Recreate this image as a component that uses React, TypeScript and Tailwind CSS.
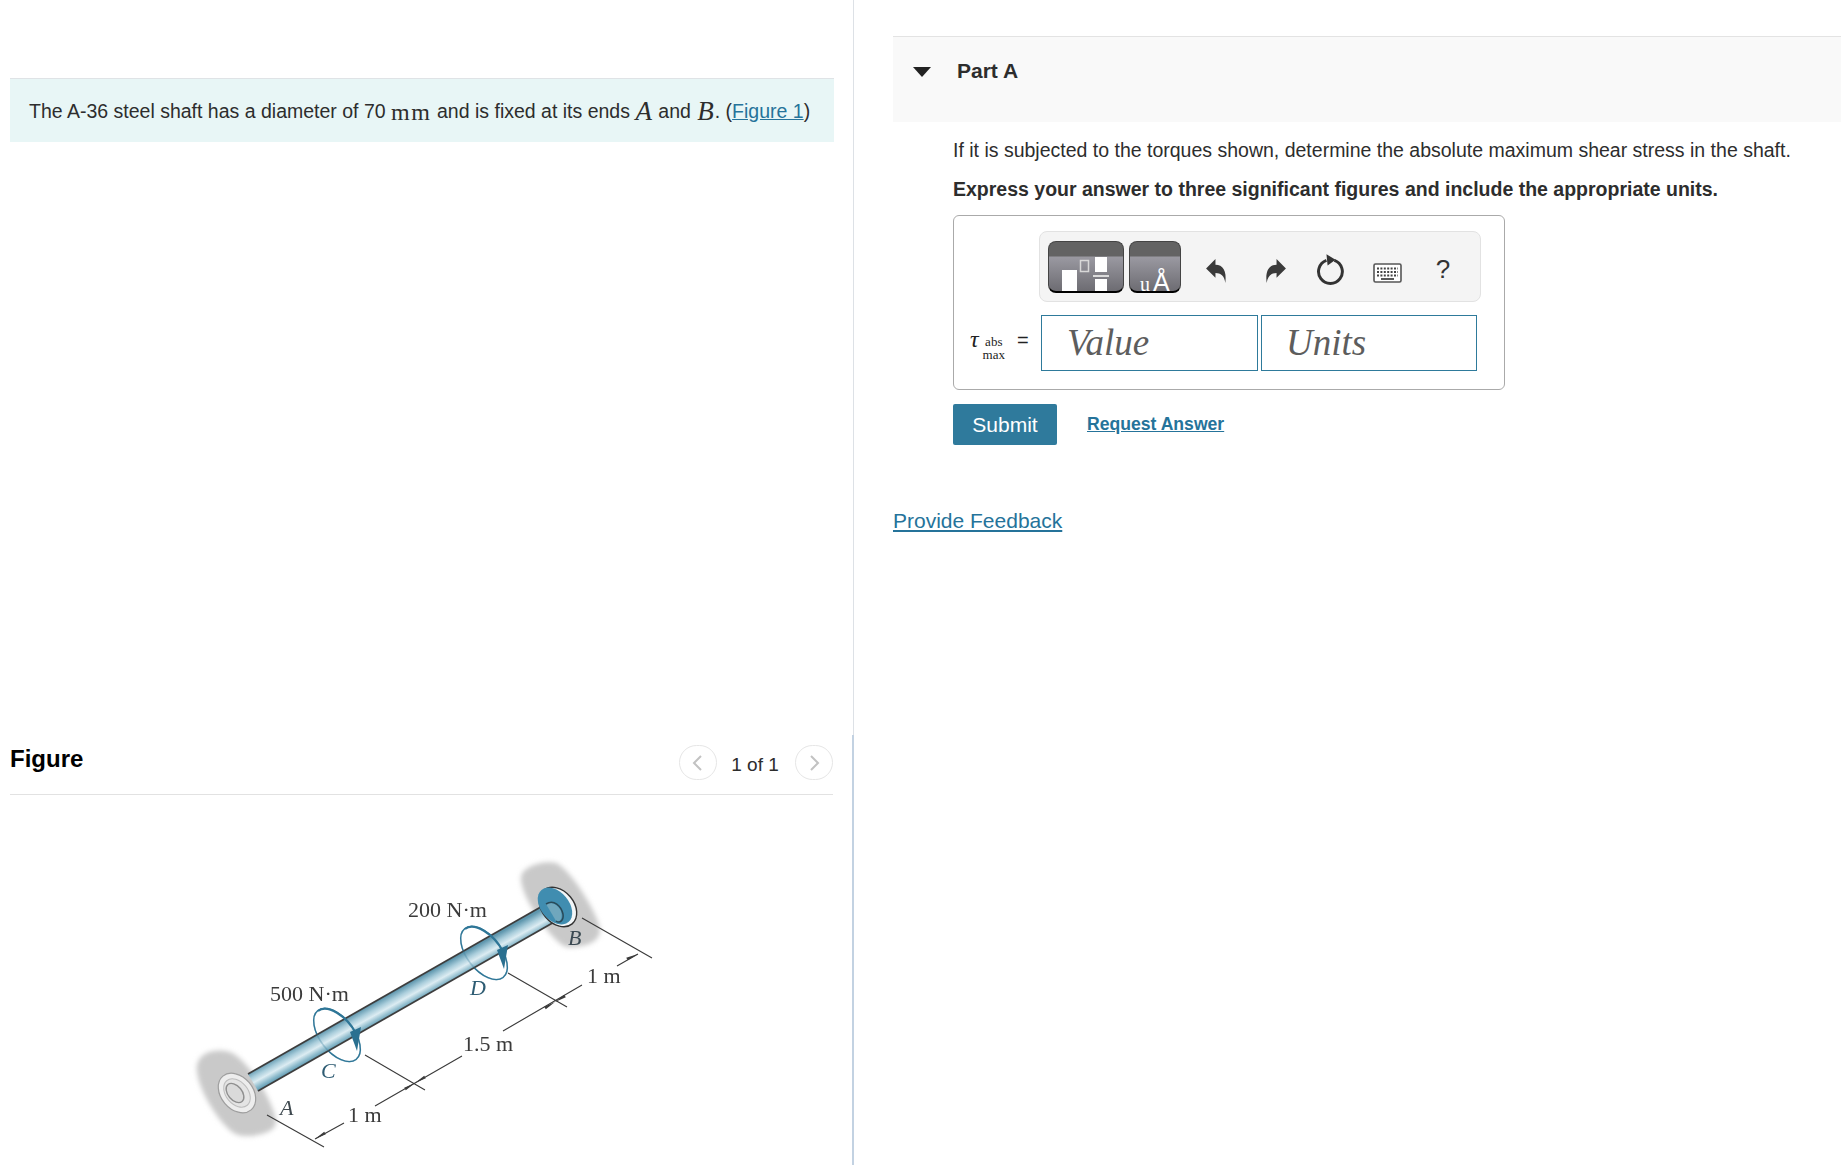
const Ring = ({ dx, dy }: { dx: number; dy: number }) => (
  <g transform={`translate(${dx} ${dy})`}>
    <ellipse cx="337" cy="1035" rx="31" ry="17" transform="rotate(52 337 1035)" fill="none" stroke="#2f7697" strokeOpacity="0.3" strokeWidth="1.6" />
    <path d="M318 1011 A31 17 52 0 1 356 1033.5" fill="none" stroke="#2f7697" strokeWidth="2.2" />
    <polygon points="350,1032 361,1027 357,1051" fill="#2a6f90" />
  </g>
);

const Shaft = () => (
  <svg viewBox="180 850 500 315" className="w-[500px] h-[315px] block">
    <defs>
      <linearGradient id="sh" gradientUnits="userSpaceOnUse" x1="397" y1="990" x2="407" y2="1008">
        <stop offset="0" stopColor="#5f97ae" />
        <stop offset="0.3" stopColor="#a9cddb" />
        <stop offset="0.55" stopColor="#dcecf2" />
        <stop offset="0.8" stopColor="#8fbccd" />
        <stop offset="1" stopColor="#5c98b0" />
      </linearGradient>
      <filter id="b1"><feGaussianBlur stdDeviation="0.5" /></filter>
      <filter id="b2"><feGaussianBlur stdDeviation="2.5" /></filter>
    </defs>
    <g filter="url(#b2)" fill="#c9c9c9">
      <path d="M197 1065 C200 1050 222 1048 232 1053 C250 1062 275 1105 276 1122 C276 1134 250 1138 238 1135 C222 1130 194 1085 197 1065Z" />
      <path d="M521 878 C521 866 545 860 556 863 C572 870 600 918 600 930 C600 945 578 948 566 947 C550 940 520 895 521 878Z" />
    </g>
    <g filter="url(#b1)">
      <ellipse cx="337" cy="1035" rx="31" ry="17" transform="rotate(52 337 1035)" fill="none" stroke="#2f7697" strokeWidth="1.4" />
      <ellipse cx="484" cy="953" rx="31" ry="17" transform="rotate(52 484 953)" fill="none" stroke="#2f7697" strokeWidth="1.4" />
      <polygon points="248,1074 546,904 556,921 258,1091" fill="url(#sh)" />
      <line x1="248" y1="1074" x2="546" y2="904" stroke="#3e3e3e" strokeWidth="1.8" />
      <line x1="258" y1="1091" x2="556" y2="921" stroke="#3e3e3e" strokeWidth="1.8" />
      <Ring dx={0} dy={0} />
      <Ring dx={147} dy={-82} />
      <ellipse cx="237" cy="1093" rx="22" ry="16" transform="rotate(50 237 1093)" fill="#ededed" stroke="#9e9e9e" strokeWidth="1.2" />
      <ellipse cx="237" cy="1093" rx="16" ry="11" transform="rotate(50 237 1093)" fill="#e4e4e4" stroke="#bdbdbd" strokeWidth="1" />
      <ellipse cx="235" cy="1093" rx="11" ry="7" transform="rotate(50 235 1093)" fill="#dadada" stroke="#8f8f8f" strokeWidth="1.4" />
      <ellipse cx="558" cy="907" rx="22" ry="16" transform="rotate(50 558 907)" fill="#f2f6f8" stroke="#333" strokeWidth="1.4" />
      <ellipse cx="555" cy="906" rx="21" ry="14" transform="rotate(50 555 906)" fill="#3f8db0" />
      <path d="M546 904 C552 901 558 905 561 911 C563 918 560 923 556 921 Z" fill="#6fa7bd" />
      <path d="M546 904 C554 899 561 906 563 914 C564 920 560 924 556 921" fill="none" stroke="#2a4a58" strokeWidth="1.5" />
      <g stroke="#3a3a3a" strokeWidth="1.1" fill="none">
        <path d="M267 1115 L324 1147 M315 1139 L344 1123 M375 1106 L462 1056 M365 1055 L425 1090" />
        <path d="M508 973 L567 1007 M503 1031 L582 985 M617 966 L638 954 M582 918 L652 958" />
      </g>
      <g fill="#3a3a3a">
        <polygon points="315,1139 325.8,1134.3 324.2,1131.7" />
        <polygon points="415,1083 405.8,1090.3 404.2,1087.7" />
        <polygon points="415,1083 425.8,1078.3 424.2,1075.7" />
        <polygon points="555,1002 545.8,1009.3 544.2,1006.7" />
        <polygon points="555,1002 565.8,997.3 564.2,994.7" />
        <polygon points="638,954 627.8,960.3 626.2,957.7" />
      </g>
    </g>
    <g className="font-['Liberation_Serif',serif]" fill="#3a3a3a" fontSize="22" filter="url(#b1)">
      <text x="270" y="1001">500 N·m</text>
      <text x="408" y="917">200 N·m</text>
      <text x="348" y="1122">1 m</text>
      <text x="463" y="1051">1.5 m</text>
      <text x="587" y="983">1 m</text>
      <g fontStyle="italic">
        <text x="321" y="1078" fill="#2f5c73">C</text>
        <text x="470" y="995" fill="#2f5c73">D</text>
        <text x="568" y="945" fill="#3a4a52">B</text>
        <text x="280" y="1115" fill="#3f4a50">A</text>
      </g>
    </g>
  </svg>
);

const Pager = ({ d }: { d: string }) => (
  <div className="w-[38px] h-[35px] rounded-full border border-[#e6e6e6] flex items-center justify-center">
    <svg width="14" height="18" viewBox="0 0 14 18" fill="none" stroke="#c2c2c2" strokeWidth="2">
      <path d={d} />
    </svg>
  </div>
);

const Arrow = ({ flip }: { flip?: boolean }) => (
  <svg width="21" height="25" viewBox="0 0 20 24" className={flip ? "-scale-x-100" : ""}>
    <path fill="#3a3a3a" d="M0 10 L9 1 L9 6.5 C16 6.5 20 12 18.5 24 C17.5 17 14 14.5 9 14.5 L9 19 Z" />
  </svg>
);

const Keyboard = () => (
  <svg width="29" height="20" viewBox="0 0 29 20" className="block">
    <rect x="1" y="1" width="27" height="18" rx="1.5" fill="#fff" stroke="#555" strokeWidth="1.6" />
    <path d="M4 5.5h21M4 9h21" stroke="#444" strokeWidth="1.8" strokeDasharray="2 1.4" />
    <path d="M4 12.5h21" stroke="#444" strokeWidth="1.8" strokeDasharray="2 1.4" />
    <path d="M8 16h13" stroke="#444" strokeWidth="1.8" />
  </svg>
);

const bar = "bg-[linear-gradient(to_bottom,#636363_0,#636363_14px,#9a99a1_15px,#6d6c72_100%)]";

export default function App() {
  return (
    <div className="w-[1841px] h-[1165px] overflow-hidden bg-white flex font-['Liberation_Sans',Arial,sans-serif] text-[#2d2d2d]">
      <div className="w-[854px] shrink-0 flex flex-col">
        <div className="h-[735px] border-r border-[#dde1e6] pt-[78px] pl-[10px] pr-[19px]">
          <div className="h-[64px] bg-[#e8f6f6] border-t border-[#dfe3e6] pl-[19px] pt-[2px] flex items-center text-[19.5px] whitespace-nowrap">
            <span>The A-36 steel shaft has a diameter of 70&nbsp;</span>
            <span className="font-['Liberation_Serif',serif] text-[24px] tracking-[1.6px] leading-none">mm</span>
            <span>&nbsp;and is fixed at its ends&nbsp;</span>
            <span className="font-['Liberation_Serif',serif] italic text-[27px] leading-none mr-[1px]">A</span>
            <span>&nbsp;and&nbsp;</span>
            <span className="font-['Liberation_Serif',serif] italic text-[27px] leading-none ml-[1px] mr-[1px]">B</span>
            <span>. (</span>
            <span className="text-[#25739a] underline">Figure 1</span>
            <span>)</span>
          </div>
        </div>
        <div className="flex-1 border-r-2 border-[#c3d2e2] pl-[10px] pr-[19px] overflow-hidden">
          <div className="h-[60px] border-b border-[#e2e2e2] flex relative">
            <div className="text-[24px] font-bold text-black leading-[28px] mt-[10px]">Figure</div>
            <div className="ml-auto flex items-start mt-[10px]">
              <Pager d="M10 2 L3 9 L10 16" />
              <div className="w-[76px] text-center text-[19px] leading-[22px] mt-[9px]">1 of 1</div>
              <div className="ml-[2px]"><Pager d="M4 2 L11 9 L4 16" /></div>
            </div>
          </div>
          <div className="pt-[55px] pl-[170px]">
            <Shaft />
          </div>
        </div>
      </div>
      <div className="flex-1 pl-[39px] pt-[36px]">
        <div className="h-[86px] bg-[#f9f9f9] border-t border-[#e3e3e3] flex items-start">
          <svg width="18" height="10" viewBox="0 0 18 10" className="ml-[20px] mt-[30px]">
            <polygon points="0,0 18,0 9,10" fill="#222" />
          </svg>
          <div className="ml-[26px] mt-[22px] text-[21px] leading-[24px] font-bold">Part A</div>
        </div>
        <div className="pl-[60px]">
          <p className="text-[19.5px] leading-[24px] mt-[16px] whitespace-nowrap">If it is subjected to the torques shown, determine the absolute maximum shear stress in the shaft.</p>
          <p className="text-[19.5px] leading-[24px] font-bold mt-[15px] whitespace-nowrap">Express your answer to three significant figures and include the appropriate units.</p>
          <div className="mt-[14px] w-[552px] h-[175px] border border-[#aaaaaa] rounded-[6px] pl-[85px] pt-[15px]">
            <div className="w-[442px] h-[71px] bg-[#f4f4f4] border border-[#e2e2e2] rounded-[8px] flex items-center pl-[8px]">
              <div className={`w-[76px] h-[52px] rounded-[8px] border border-[#444] border-b-2 border-b-black ${bar} overflow-hidden`}>
                <svg width="74" height="50" viewBox="0 0 74 50" className="block">
                  <rect x="13" y="28" width="15" height="22" fill="#fff" />
                  <rect x="31.5" y="18.5" width="8" height="11" fill="none" stroke="#d8d8d8" strokeWidth="1.5" />
                  <rect x="46" y="15" width="12" height="15" fill="#fff" />
                  <rect x="44" y="33" width="16" height="2" fill="#dcdcdc" />
                  <rect x="46" y="37" width="12" height="13" fill="#fff" />
                </svg>
              </div>
              <div className={`ml-[5px] w-[52px] h-[52px] rounded-[8px] border border-[#444] border-b-2 border-b-black ${bar} relative`}>
                <span className="absolute left-[10px] bottom-[-3px] text-white text-[20px] leading-none font-['Liberation_Serif',serif]">u</span>
                <span className="absolute left-[23px] bottom-[-4px] text-white text-[25px] leading-none">Å</span>
              </div>
              <div className="ml-[25px] w-[21px] flex justify-center mt-[7px]"><Arrow /></div>
              <div className="ml-[38px] w-[21px] flex justify-center mt-[7px]"><Arrow flip /></div>
              <div className="ml-[30px] w-[30px] mt-[6px]">
                <svg width="30" height="34" viewBox="0 0 26 30" fill="none" className="block">
                  <path d="M16 6.5 A10.5 10.5 0 1 1 9 6.5" stroke="#333" strokeWidth="2.6" />
                  <polygon points="9,1 17,6 10,11" fill="#333" />
                </svg>
              </div>
              <div className="ml-[27px] mt-[12px]"><Keyboard /></div>
              <div className="ml-[33px] w-[16px] text-[26px] text-[#333] leading-none text-center mt-[5px]">?</div>
            </div>
            <div className="relative mt-[13px] flex gap-[3px] pl-[2px]">
              <div className="absolute left-[-69px] top-[15px] flex items-start text-[#222] font-['Liberation_Serif',serif]">
                <span className="italic text-[24px] leading-[20px] -mt-[1px]">τ</span>
                <span className="ml-[4px] text-[13px] leading-[13px] flex flex-col items-center mt-[5px]">
                  <span>abs</span>
                  <span>max</span>
                </span>
                <span className="ml-[12px] text-[20px] leading-[18px] mt-[1px] font-['Liberation_Sans',sans-serif]">=</span>
              </div>
              <div className="w-[217px] h-[56px] border border-[#2e7a9b] pl-[25px] flex items-center font-['Liberation_Serif',serif] italic text-[37px] text-[#5d5d5d]">Value</div>
              <div className="w-[216px] h-[56px] border border-[#2e7a9b] pl-[24px] flex items-center font-['Liberation_Serif',serif] italic text-[37px] text-[#5d5d5d]">Units</div>
            </div>
          </div>
          <div className="mt-[14px] flex items-center">
            <div className="w-[104px] h-[41px] bg-[#2f7a9c] text-white text-[21px] flex items-center justify-center rounded-[2px]">Submit</div>
            <div className="ml-[30px] text-[17.6px] font-bold text-[#25739a] underline">Request Answer</div>
          </div>
        </div>
        <div className="mt-[63px] text-[21px] leading-[26px] text-[#25739a] underline">Provide Feedback</div>
      </div>
    </div>
  );
}
